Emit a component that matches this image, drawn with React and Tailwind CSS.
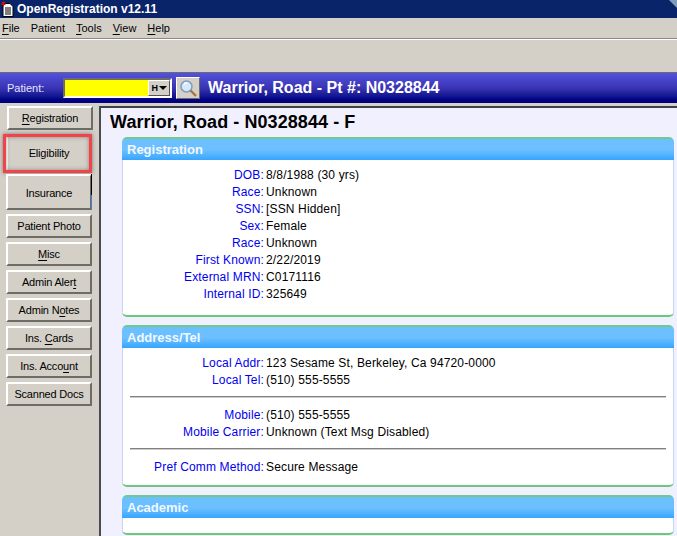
const navBelow = [
  ["Patient Photo", ""],
  ["Misc", "M"],
  ["Admin Alert", "t"],
  ["Admin Notes", "o"],
  ["Ins. Cards", "C"],
  ["Ins. Account", "u"],
  ["Scanned Docs", ""],
]

const registration = [
  ["DOB:", "8/8/1988 (30 yrs)"],
  ["Race:", "Unknown"],
  ["SSN:", "[SSN Hidden]"],
  ["Sex:", "Female"],
  ["Race:", "Unknown"],
  ["First Known:", "2/22/2019"],
  ["External MRN:", "C0171116"],
  ["Internal ID:", "325649"],
]

const btn =
  "flex items-center justify-center border-2 border-t-white border-l-white border-r-[#6e6c67] border-b-[#6e6c67] bg-[#d4d0c8] text-[11px] tracking-[-0.2px] text-black"

// underlines the mnemonic letter like the win32 buttons do
const Mnemonic = ({ text, letter }) => {
  const i = letter ? text.indexOf(letter) : -1
  if (i < 0) return <span>{text}</span>
  return (
    <span>
      {text.slice(0, i)}
      <span className="underline underline-offset-2">{letter}</span>
      {text.slice(i + 1)}
    </span>
  )
}

const Row = ({ label, value }) => (
  <div className="flex h-[17px] items-center text-[12px] leading-none tracking-[0.15px]">
    <span className="w-[141px] text-right text-[#0000ee]">{label}</span>
    <span className="ml-[2px] text-black">{value}</span>
  </div>
)

const Panel = ({ title, bodyClass, children }) => (
  <section className="overflow-hidden rounded-[5px] border-b-2 border-b-[#6cc77c] bg-white">
    <h2 className="flex h-[23px] items-center border-t-2 border-t-[#74c98a] bg-gradient-to-b from-[#6cc0ff] from-50% to-[#35a5ff] pl-[5px] text-[13px] font-bold text-[#f2f8ff]">
      {title}
    </h2>
    <div className={`border-x border-x-[#c6d6f5] ${bodyClass}`}>{children}</div>
  </section>
)

const Divider = () => <div className="mx-[7px] my-[8px] h-[2px] border-b border-b-[#cccccc] bg-[#808080]" />

const DocIcon = () => (
  <svg width="14" height="16" viewBox="0 0 14 16" className="ml-[1px]">
    <path d="M2 2.5h7l3 3v10H2z" fill="#fff" stroke="#000" />
    <path d="M4 7h6M4 9h6M4 11h6M4 13h6" stroke="#000" />
    <path d="M0 3h5M2.5 .5v5M1 1l3 3M4 1L1 4" stroke="#e01010" />
  </svg>
)

const SearchIcon = () => (
  <svg width="19" height="19" viewBox="0 0 19 19">
    <circle cx="7.5" cy="7.5" r="5.5" fill="#d7e8fb" stroke="#7d9cc4" strokeWidth="1.5" />
    <path d="M5 5.5a3 3 0 0 1 3-1.5" fill="none" stroke="#fff" strokeWidth="1.3" />
    <path d="M11.5 11.5l5.5 5.5" stroke="#a8763a" strokeWidth="2.4" />
  </svg>
)

export default function App() {
  return (
    <div className="flex h-[536px] w-[677px] flex-col overflow-hidden bg-[#d4d0c8] font-['Liberation_Sans',sans-serif]">
      <div className="relative flex h-[18px] shrink-0 items-center gap-[2px] bg-[#0a246a]">
        <DocIcon />
        <span className="text-[12px] font-bold text-white">OpenRegistration v12.11</span>
        <span className="absolute right-0 top-0 h-0 w-0 border-l-[8px] border-t-[8px] border-l-transparent border-t-[#7f9db9]" />
      </div>

      <nav className="flex h-[20px] shrink-0 items-center gap-[11px] pl-[2px] text-[11px] text-black">
        {[["File", "F"], ["Patient", ""], ["Tools", "T"], ["View", "V"], ["Help", "H"]].map(([name, key]) => (
          <Mnemonic key={name} text={name} letter={key} />
        ))}
      </nav>

      <div className="h-[34px] shrink-0 border-t border-t-[#8a8884] shadow-[inset_0_1px_0_#ffffff]" />

      <div className="flex h-[31px] shrink-0 items-center border-t border-t-[#6b6b6b] bg-gradient-to-b from-[#5252de] via-[#3a34b4] to-[#000080] to-90%">
        <span className="ml-[7px] w-[56px] text-[11px] text-[#e4e6ff]">Patient:</span>
        <div className="flex h-[20px] w-[109px] border-2 border-t-[#6e6c67] border-l-[#6e6c67] border-r-white border-b-white">
          <div className="flex-1 bg-[#ffff00]" />
          <div className="flex w-[22px] items-center justify-end gap-[1px] border border-t-white border-l-white border-r-[#555] border-b-[#555] bg-[#d4d0c8] pr-[2px]">
            <span className="text-[9px] font-bold leading-none text-black">H</span>
            <span className="h-0 w-0 border-x-[4px] border-t-[4px] border-x-transparent border-t-black" />
          </div>
        </div>
        <button className="ml-[4px] flex h-[22px] w-[24px] items-center justify-center border border-t-white border-l-white border-r-[#6e6c67] border-b-[#6e6c67] bg-[#d4d0c8]">
          <SearchIcon />
        </button>
        <h1 className="ml-[8px] text-[16px] font-bold text-white">Warrior, Road - Pt #: N0328844</h1>
      </div>

      <div className="flex min-h-0 flex-1 pt-[3px]">
        <aside className="flex w-[99px] shrink-0 flex-col items-start">
          <button className={`${btn} ml-[7px] h-[24px] w-[86px]`}>
            <Mnemonic text="Registration" letter="R" />
          </button>
          <button className={`${btn} relative ml-[6px] mt-[5px] h-[37px] w-[86px]`}>
            Eligibility
            <span className="absolute -inset-y-[3px] -left-[5px] -right-[2px] border-[3px] border-[#f4424a] shadow-[0_0_4px_rgba(60,60,60,0.6),inset_0_0_4px_rgba(60,60,60,0.5)]" />
          </button>
          <button className={`${btn} relative ml-[6px] mt-[2px] h-[36px] w-[86px] pt-[2px]`}>
            Insurance
            <span className="absolute -right-[2px] -top-[2px] h-[21px] w-[1px] bg-black" />
            <span className="absolute -bottom-[2px] -right-[2px] h-[15px] w-[1px] bg-[#4a7fd0]" />
          </button>
          {navBelow.map(([name, key]) => (
            <button key={name} className={`${btn} ml-[6px] mt-[4px] h-[24px] w-[86px]`}>
              <Mnemonic text={name} letter={key} />
            </button>
          ))}
        </aside>

        <main className="min-w-0 flex-1 border-l-2 border-t-2 border-l-[#4a4a4f] border-t-[#3f3f46] bg-[#f0f0ff] pl-[9px] pr-[3px]">
          <h1 className="mb-[4px] mt-[4px] text-[18px] font-bold leading-[21px] tracking-[0.07px] text-black">
            Warrior, Road - N0328844 - F
          </h1>
          <div className="ml-[12px] flex flex-col gap-[8px]">
            <Panel title="Registration" bodyClass="h-[155px] pt-[6px]">
              {registration.map(([label, value], i) => (
                <Row key={i} label={label} value={value} />
              ))}
            </Panel>
            <Panel title="Address/Tel" bodyClass="h-[137px] pt-[6px]">
              <Row label="Local Addr:" value="123 Sesame St, Berkeley, Ca 94720-0000" />
              <Row label="Local Tel:" value="(510) 555-5555" />
              <Divider />
              <Row label="Mobile:" value="(510) 555-5555" />
              <Row label="Mobile Carrier:" value="Unknown (Text Msg Disabled)" />
              <Divider />
              <Row label="Pref Comm Method:" value="Secure Message" />
            </Panel>
            <Panel title="Academic" bodyClass="h-[15px]" />
          </div>
        </main>
      </div>
    </div>
  )
}
